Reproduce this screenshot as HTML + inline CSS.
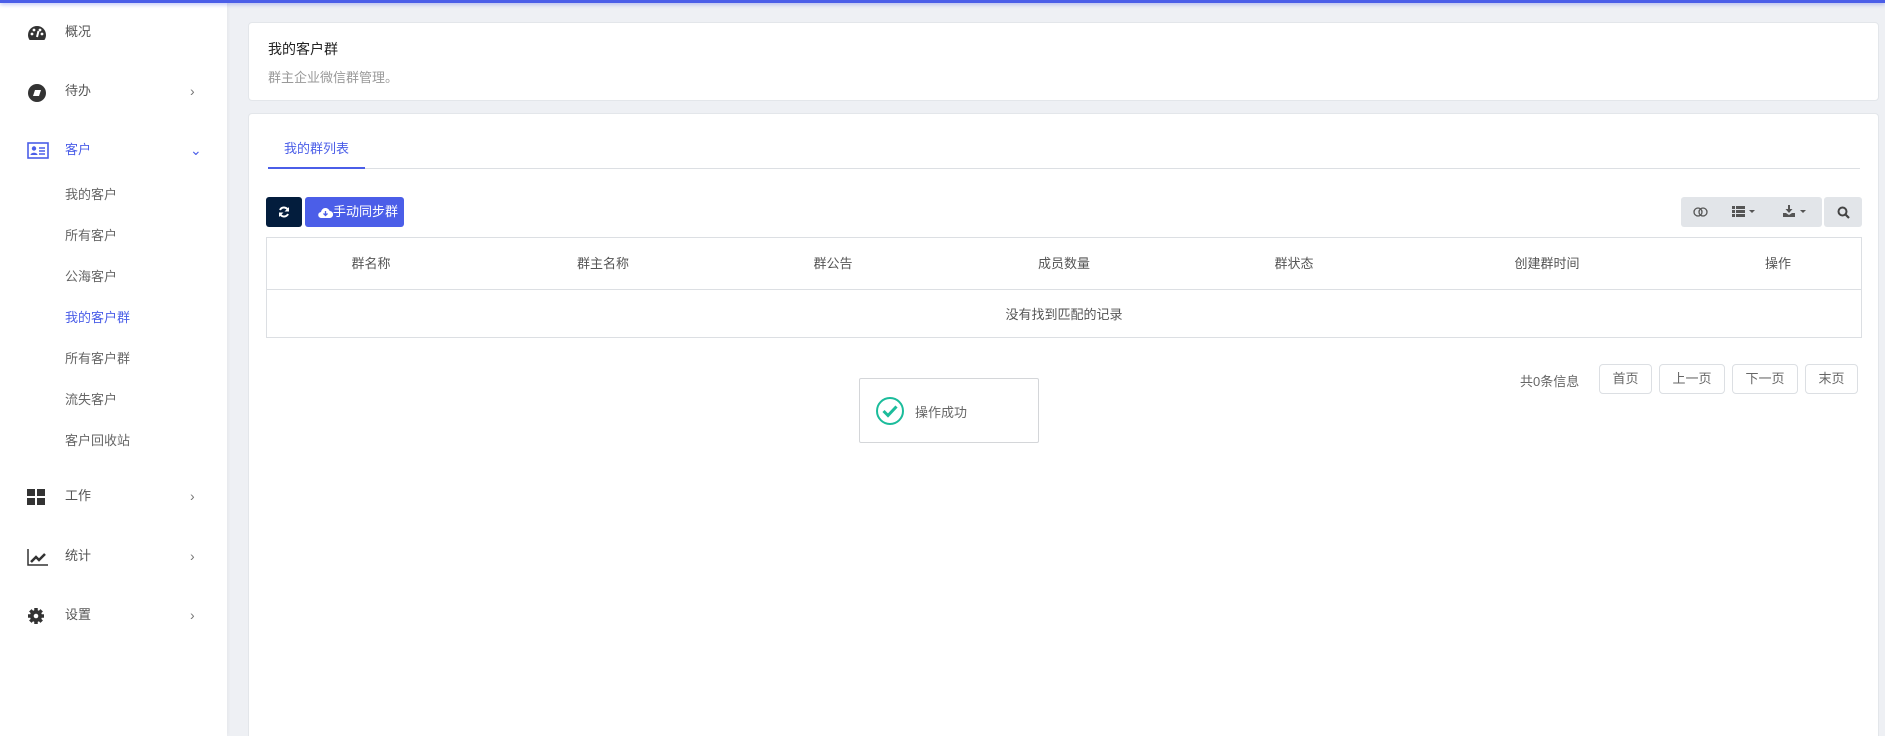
<!DOCTYPE html>
<html style="width:1885px;height:736px;overflow:hidden"><head><meta charset="utf-8"><style>
*{margin:0;padding:0;box-sizing:border-box}
body{width:1885px;height:736px;overflow:hidden;background:#eef0f4;font-family:"Liberation Sans","Noto Sans CJK SC",sans-serif;font-size:13px;color:#555;position:relative}
.a{position:absolute}
.top{left:0;top:0;width:1885px;height:3px;background:#4b5ee8;box-shadow:0 1px 4px rgba(75,94,232,.5);z-index:5}
.side{left:0;top:0;width:227px;height:736px;background:#fff;box-shadow:1px 0 4px rgba(0,0,0,.04)}
.mi{position:absolute;left:0;width:227px;height:20px;line-height:20px}
.mi .t{position:absolute;left:65px;top:0;color:#555}
.mi .ch{position:absolute;left:190px;top:0;color:#777;font-size:14px}
.mi svg{position:absolute;left:27px;top:2px}
.sub{position:absolute;left:65px;color:#666;line-height:20px}
.card{background:#fff;border:1px solid #e3e6ea;border-radius:4px}
.btn{position:absolute;top:364px;height:30px;border:1px solid #dcdfe3;border-radius:4px;text-align:center;line-height:28px;color:#666;background:#fff}
.th{position:absolute;top:253px;transform:translateX(-50%);color:#555;white-space:nowrap}
</style></head><body>
<div class="a top"></div>
<div class="a side">
 <div class="mi" style="top:22px"><svg width="20" height="18" viewBox="0 0 20 18"><path d="M10 2a9 9 0 0 0-9 9c0 2 .6 3.6 1.6 5h14.8c1-1.4 1.6-3 1.6-5a9 9 0 0 0-9-9z" fill="#333"/><circle cx="5" cy="10" r="1.4" fill="#fff"/><circle cx="7" cy="6" r="1.4" fill="#fff"/><circle cx="13" cy="6" r="1.4" fill="#fff"/><circle cx="15" cy="10" r="1.4" fill="#fff"/><path d="M10 13l1.5-6" stroke="#fff" stroke-width="2"/></svg><span class="t">概况</span></div>
 <div class="mi" style="top:81px"><svg width="20" height="20" viewBox="0 0 20 20"><circle cx="10" cy="10" r="9" fill="#333"/><path d="M6 13l2-6h6l-2 6z" fill="#fff"/></svg><span class="t">待办</span><span class="ch">›</span></div>
 <div class="mi" style="top:140px"><svg width="22" height="18" viewBox="0 0 22 18"><rect x="1" y="1" width="20" height="15" fill="none" stroke="#4b5ee8" stroke-width="1.6"/><circle cx="7" cy="6.5" r="2.2" fill="#4b5ee8"/><path d="M3.5 13c0-3 7-3 7 0z" fill="#4b5ee8"/><path d="M12 6h6M12 9h6M12 12h6" stroke="#4b5ee8" stroke-width="1.4"/></svg><span class="t" style="color:#4b5ee8">客户</span><span class="ch" style="color:#4b5ee8">⌄</span></div>
 <div class="sub" style="top:185px">我的客户</div>
 <div class="sub" style="top:226px">所有客户</div>
 <div class="sub" style="top:267px">公海客户</div>
 <div class="sub" style="top:308px;color:#4b5ee8">我的客户群</div>
 <div class="sub" style="top:349px">所有客户群</div>
 <div class="sub" style="top:390px">流失客户</div>
 <div class="sub" style="top:431px">客户回收站</div>
 <div class="mi" style="top:486px"><svg width="18" height="18" viewBox="0 0 18 18" fill="#333"><rect x="0" y="1" width="8" height="7"/><rect x="10" y="1" width="8" height="7"/><rect x="0" y="10" width="8" height="7"/><rect x="10" y="10" width="8" height="7"/></svg><span class="t">工作</span><span class="ch">›</span></div>
 <div class="mi" style="top:546px"><svg width="22" height="18" viewBox="0 0 22 18"><path d="M1 1v16h20" fill="none" stroke="#333" stroke-width="1.5"/><path d="M4 14l5-5 3 3 6-6" fill="none" stroke="#333" stroke-width="2.5"/></svg><span class="t">统计</span><span class="ch">›</span></div>
 <div class="mi" style="top:605px"><svg width="18" height="18" viewBox="0 0 18 18"><circle cx="9" cy="9" r="6" fill="#333"/><g stroke="#333" stroke-width="3.5"><path d="M9 1v16M1 9h16M3.3 3.3l11.4 11.4M14.7 3.3L3.3 14.7"/></g><circle cx="9" cy="9" r="2.3" fill="#fff"/></svg><span class="t">设置</span><span class="ch">›</span></div>
</div>

<div class="a card" style="left:248px;top:22px;width:1631px;height:79px"></div>
<div class="a" style="left:268px;top:39px;font-size:14px;color:#222">我的客户群</div>
<div class="a" style="left:268px;top:67px;color:#999">群主企业微信群管理。</div>

<div class="a card" style="left:248px;top:113px;width:1631px;height:623px;border-bottom:none;border-radius:4px 4px 0 0"></div>
<div class="a" style="left:284px;top:138px;color:#4b5ee8">我的群列表</div>
<div class="a" style="left:268px;top:168px;width:1592px;height:1px;background:#dcdfe3"></div>
<div class="a" style="left:268px;top:167px;width:97px;height:2px;background:#4b5ee8"></div>

<div class="a" style="left:266px;top:197px;width:36px;height:30px;background:#031d3d;border-radius:3px"><svg style="position:absolute;left:12px;top:9px" width="12" height="12" viewBox="0 0 12 12"><path d="M10 4.5A4.3 4.3 0 0 0 2 4M2 7.5A4.3 4.3 0 0 0 10 8" fill="none" stroke="#fff" stroke-width="2"/><path d="M11 1v4.5H6.5zM1 11V6.5h4.5z" fill="#fff"/></svg></div>
<div class="a" style="left:305px;top:197px;width:99px;height:30px;background:#4b5ee8;border-radius:3px;color:#fff;line-height:30px;padding-left:28px">手动同步群<svg style="position:absolute;left:13px;top:10px" width="15" height="11" viewBox="0 0 15 11"><path d="M3.5 11a3 3 0 0 1-.5-6 4.5 4.5 0 0 1 8.7-1A3.5 3.5 0 0 1 11.5 11z" fill="#fff"/><path d="M7.5 4v4M5.5 6.5l2 2 2-2" stroke="#4b5ee8" stroke-width="1.3" fill="none"/></svg></div>

<div class="a" style="left:1681px;top:197px;width:141px;height:30px;background:#e2e5e9;border-radius:3px"></div>
<svg class="a" style="left:1693px;top:207px" width="16" height="10" viewBox="0 0 16 10"><circle cx="5" cy="5" r="4" fill="none" stroke="#555" stroke-width="1.3"/><circle cx="10" cy="5" r="4" fill="none" stroke="#555" stroke-width="1.3"/></svg>
<svg class="a" style="left:1732px;top:206px" width="28" height="11" viewBox="0 0 28 11" fill="#555"><rect x="0" y="0" width="3" height="3"/><rect x="4" y="0" width="9" height="3"/><rect x="0" y="4" width="3" height="3"/><rect x="4" y="4" width="9" height="3"/><rect x="0" y="8" width="3" height="3"/><rect x="4" y="8" width="9" height="3"/><path d="M17 4h6l-3 3z"/></svg>
<svg class="a" style="left:1783px;top:205px" width="26" height="12" viewBox="0 0 26 12" fill="#555"><path d="M5 0h2v4h2.5L6 8 2.5 4H5z"/><path d="M0 8h3l3 2 3-2h3v4H0z"/><path d="M17 5h6l-3 3z"/></svg>
<div class="a" style="left:1824px;top:197px;width:38px;height:30px;background:#e2e5e9;border-radius:3px"><svg style="position:absolute;left:13px;top:9px" width="13" height="13" viewBox="0 0 13 13"><circle cx="5.5" cy="5.5" r="4" fill="none" stroke="#444" stroke-width="2"/><path d="M8.5 8.5l3.5 3.5" stroke="#444" stroke-width="2.2"/></svg></div>

<div class="a" style="left:266px;top:237px;width:1596px;height:101px;border:1px solid #dcdfe3"></div>
<div class="a" style="left:267px;top:289px;width:1594px;height:1px;background:#dcdfe3"></div>
<div class="th" style="left:371px">群名称</div>
<div class="th" style="left:603px">群主名称</div>
<div class="th" style="left:833px">群公告</div>
<div class="th" style="left:1064px">成员数量</div>
<div class="th" style="left:1294px">群状态</div>
<div class="th" style="left:1547px">创建群时间</div>
<div class="th" style="left:1778px">操作</div>
<div class="th" style="left:1064px;top:304px">没有找到匹配的记录</div>

<div class="a" style="left:1520px;top:371px;color:#666">共0条信息</div>
<div class="btn" style="left:1599px;width:53px">首页</div>
<div class="btn" style="left:1659px;width:66px">上一页</div>
<div class="btn" style="left:1732px;width:66px">下一页</div>
<div class="btn" style="left:1805px;width:53px">末页</div>

<div class="a" style="left:859px;top:378px;width:180px;height:65px;background:#fff;border:1px solid #d4d6d9;border-radius:2px"></div>
<svg class="a" style="left:875px;top:396px" width="30" height="30" viewBox="0 0 30 30"><circle cx="15" cy="15" r="13" fill="none" stroke="#1bbc9b" stroke-width="2"/><path d="M8.5 15l4.5 4.5 8.5-9" fill="none" stroke="#1bbc9b" stroke-width="3"/></svg>
<div class="a" style="left:915px;top:402px;color:#666">操作成功</div>
</body></html>
